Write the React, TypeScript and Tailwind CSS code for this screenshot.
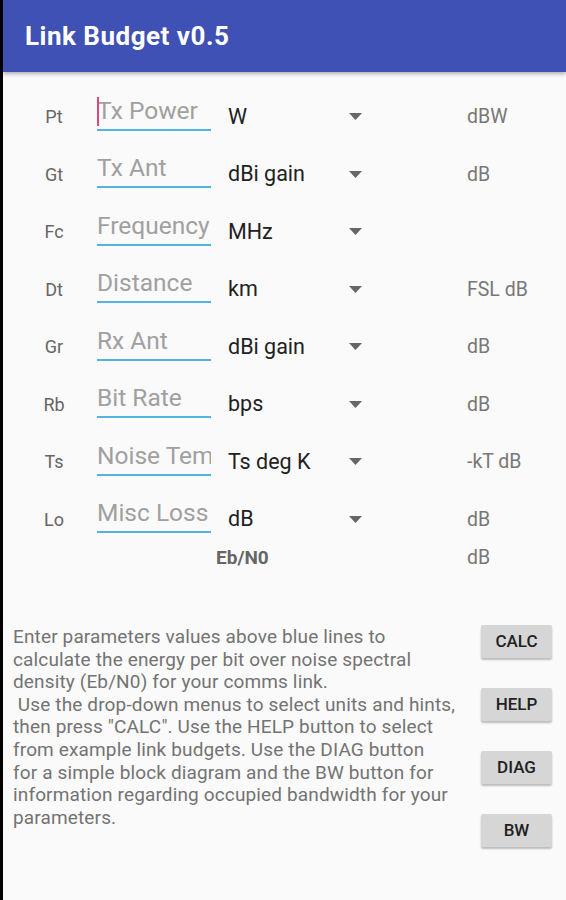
const rows = [
  { sym: "Pt", hint: "Tx Power", unit: "W", out: "dBW", focused: true },
  { sym: "Gt", hint: "Tx Ant", unit: "dBi gain", out: "dB" },
  { sym: "Fc", hint: "Frequency", unit: "MHz", out: "" },
  { sym: "Dt", hint: "Distance", unit: "km", out: "FSL dB" },
  { sym: "Gr", hint: "Rx Ant", unit: "dBi gain", out: "dB" },
  { sym: "Rb", hint: "Bit Rate", unit: "bps", out: "dB" },
  { sym: "Ts", hint: "Noise Temp", unit: "Ts deg K", out: "-kT dB" },
  { sym: "Lo", hint: "Misc Loss", unit: "dB", out: "dB" },
];

const helpLines = [
  "Enter parameters values above blue lines to",
  "calculate the energy per bit over noise spectral",
  "density (Eb/N0) for your comms link.",
  " Use the drop-down menus to select units and hints,",
  'then press "CALC". Use the HELP button to select',
  "from example link budgets. Use the DIAG button",
  "for a simple block diagram and the BW button for",
  "information regarding occupied bandwidth for your",
  "parameters.",
];

export default function App() {
  return (
    <div className="flex h-[900px] w-[566px] overflow-hidden bg-[#fafafa] font-['Roboto',sans-serif]">
      <div className="w-[3px] shrink-0 bg-black" />
      <div className="flex flex-1 flex-col">
        <header className="relative z-10 flex h-[72px] shrink-0 items-center bg-[#3f51b5] pl-[22px] shadow-[0_2px_4px_rgba(0,0,0,0.3)]">
          <h1 className="text-[26px] font-bold tracking-[0.5px] text-white">Link Budget v0.5</h1>
        </header>

        <div className="pt-[16px]">
          {rows.map((row) => (
            <Row key={row.sym} {...row} />
          ))}
          <div className="flex h-[20px] items-center">
            <span className="ml-[213px] w-[251px] text-[19px] font-bold text-[#666]">Eb/N0</span>
            <span className="text-[19.5px] text-[#777]">dB</span>
          </div>
        </div>

        <section className="mt-[57px] flex pl-[10px] pr-[14px]">
          <p className="mt-[1px] text-[19px] leading-[22.6px] tracking-[0.14px] text-[#737373]">
            {helpLines.map((line) => (
              <span key={line} className="block whitespace-pre">
                {line}
              </span>
            ))}
          </p>
          <div className="ml-auto flex flex-col gap-[30px]">
            {["CALC", "HELP", "DIAG", "BW"].map((label) => (
              <button
                key={label}
                className="h-[33px] w-[71px] rounded-[2px] bg-[#d6d6d6] text-[17px] font-medium text-[#212121] shadow-[0_2px_2px_rgba(0,0,0,0.25)]"
              >
                {label}
              </button>
            ))}
          </div>
        </section>
      </div>
    </div>
  );
}

function Row({ sym, hint, unit, out, focused }: { sym: string; hint: string; unit: string; out: string; focused?: boolean }) {
  return (
    <div className="flex h-[57.5px] items-center">
      <span className="ml-[16px] w-[70px] text-center text-[18px] text-[#666]">{sym}</span>
      <div className="relative mb-[6px] ml-[8px] h-[34px] w-[114px] overflow-hidden border-b-2 border-[#55b4de]">
        {focused ? <span className="absolute left-0 top-0 h-[29px] w-[2px] bg-[#e0457b]" /> : null}
        <span className="block whitespace-nowrap text-[24.5px] leading-[28px] text-[#a0a0a0]">{hint}</span>
      </div>
      <div className="ml-[9px] flex w-[150px] items-center justify-between pl-[8px] pr-[8px]">
        <span className="text-[21.5px] text-[#212121]">{unit}</span>
        <svg width="13" height="7" viewBox="0 0 13 7">
          <path d="M0 0h13L6.5 7z" fill="#666" />
        </svg>
      </div>
      <span className="ml-[97px] text-[19.5px] text-[#777]">{out}</span>
    </div>
  );
}
